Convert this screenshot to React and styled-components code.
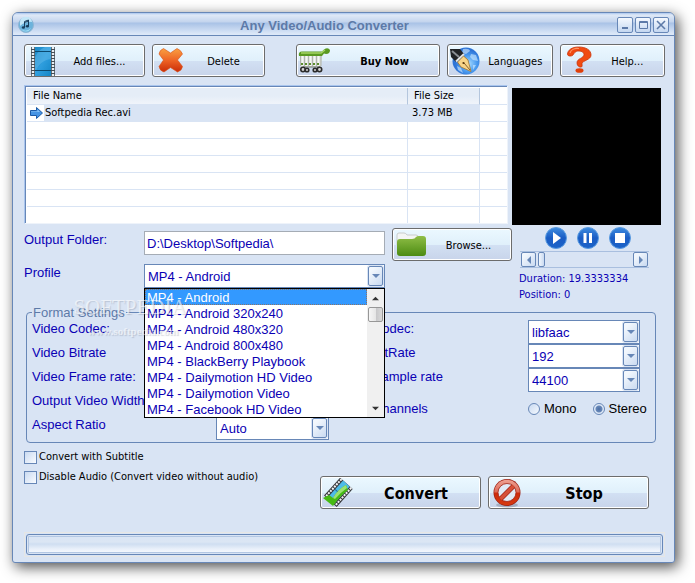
import React, {useState} from 'react'
import styled, {createGlobalStyle, css} from 'styled-components'


const GlobalStyle = createGlobalStyle`
    * {
        box-sizing: border-box;
    }
    body {
        margin: 0;
        background: #fff;
        font-family: 'Liberation Sans', Arial, sans-serif;
        font-size: 13px;
        line-height: 16px;
        color: #0a00b4;
    }
    button, input, select {
        font: inherit;
        color: inherit;
    }
`;

const tahoma = css`
    font-family: 'DejaVu Sans Condensed', 'DejaVu Sans', Tahoma, sans-serif;
    font-size: 11px;
`;

const Window = styled.main`
    margin: 12px 20px 20px 12px;
    border: 1px solid #6787b7;
    border-radius: 6px 6px 3px 3px;
    background: #d9e4f4;
    box-shadow: 3px 4px 14px rgba(0, 0, 0, .7);
`;

const TitleBar = styled.header`
    display: flex;
    align-items: center;
    height: 23px;
    padding: 2px 5px 0;
    border-bottom: 1px solid #6787b7;
    border-radius: 5px 5px 0 0;
    background: linear-gradient(#a9c5ee 0, #dfe9f7 2px, #c3d4ed 9px, #a9c2e6 10px, #dce8f8 21px);
`;

const Title = styled.h1`
    flex: 1;
    margin: 0;
    padding-top: 1px;
    text-align: center;
    font-size: 13px;
    line-height: 20px;
    font-weight: bold;
    color: #5d7aa8;
`;

const WindowButton = styled.button`
    display: flex;
    align-items: center;
    justify-content: center;
    width: 16px;
    height: 16px;
    margin-left: 2px;
    padding: 0;
    border: 1px solid #6787b7;
    border-radius: 2px;
    background: linear-gradient(#f5f9fe, #c4d7f0);
`;

const Content = styled.div`
    padding: 8px 9px 5px 11px;
`;

const Toolbar = styled.nav`
    display: flex;
    gap: 7px;
`;

const PushButton = styled.button`
    ${tahoma}
    display: flex;
    align-items: center;
    flex: ${props => props.$grow || 0} 1 ${props => props.$width || 0}px;
    height: 33px;
    margin-left: ${props => props.$apart ? '24px' : '0'};
    padding: 0 1px;
    border: 1px solid #6c6c6c;
    border-radius: 3px;
    background: linear-gradient(#ebf8ff 0, #e0f0fb 50%, #d2e0f3 52%, #c8d4ea 100%);
    box-shadow: inset 0 0 0 1px #fff;
    color: #000;
    font-weight: ${props => props.$bold ? 'bold' : 'normal'};
    font-size: ${props => props.$large ? '16px' : '11px'};
    white-space: nowrap;

    svg {
        flex: none;
    }
    span {
        flex: 1;
        padding-top: 2px;
        text-align: center;
    }
`;

const Main = styled.div`
    display: grid;
    grid-template-columns: 1fr 153px;
    margin-top: 8px;
`;

const TableFrame = styled.div`
    height: 139px;
    margin-right: 4px;
    overflow: hidden;
    border: 1px solid #a9c5ee;
    border-right-color: #eef3fa;
    border-bottom-color: #eef3fa;
    background: #fff;
    box-shadow: inset 1px 1px 0 #6787b7;
    padding: 2px 0 0 2px;
`;

const FileTable = styled.table`
    ${tahoma}
    width: 100%;
    table-layout: fixed;
    border-collapse: separate;
    border-spacing: 0;
    color: #000;

    th, td {
        height: 17px;
        padding: 0 4px;
        border-right: 1px solid #d9e4f4;
        border-bottom: 1px solid #d9e4f4;
        line-height: 16px;
        text-align: left;
        white-space: nowrap;
    }
    th {
        padding: 0 6px;
        border-right-color: #b4c6dd;
        font-weight: normal;
        background: linear-gradient(#e5edf7 50%, #f0f4fa);
    }
    th:last-child, td:last-child {
        border-right: 0;
        background: #fff;
    }
`;

const FileRow = styled.tr`
    background: ${props => props.$selected ? '#d9e4f4' : '#fff'};

    td:first-child {
        padding: 0;
    }
`;

const FileName = styled.span`
    display: flex;
    align-items: center;
    gap: 1px;
    height: 16px;

    svg {
        flex: none;
        background: #fff;
    }
`;

const OutputForm = styled.div`
    display: flex;
    align-items: flex-start;
    gap: 7px;
    margin-top: 4px;
`;

const Label = styled.label`
    padding-top: 1px;
`;

const FieldGrid = styled.div`
    flex: 1;
    display: grid;
    grid-template-columns: 120px 1fr;
    grid-auto-rows: 24px;
    row-gap: 9px;
    padding-top: 3px;
`;

const TextBox = styled.input`
    width: 100%;
    min-width: 0;
    height: 24px;
    padding: 0 2px;
    border: 1px solid #a5acb5;
    background: #fff;
    outline: none;
`;

const ComboBox = styled.div`
    position: relative;
    display: flex;
    height: 24px;
    border: 1px solid #6787b7;
    background: #fff;

    select {
        appearance: none;
        flex: 1;
        min-width: 0;
        padding: 2px 3px 0;
        border: 0;
        background: #fff;
        outline: none;
    }
`;

const ComboArrow = styled.span`
    display: flex;
    align-items: center;
    justify-content: center;
    width: 15px;
    margin: 1px;
    border: 1px solid #6787b7;
    border-radius: 2px;
    background: linear-gradient(135deg, #f2f7fd 20%, #c9daf1);
    box-shadow: 0 0 0 1px #d9e4f4;
    pointer-events: none;
`;

const DropDown = styled.div`
    position: absolute;
    z-index: 2;
    top: 23px;
    left: -1px;
    right: -1px;
    display: flex;
    border: 1px solid #000;
    background: #fff;
`;

const OptionList = styled.ul`
    flex: 1;
    margin: 0;
    padding: 0;
    list-style: none;
`;

const Option = styled.li`
    height: 16px;
    padding: 0 1px;
    border: 1px solid transparent;
    line-height: 15px;
    white-space: nowrap;

    ${props => props.$selected && css`
        border: 1px dotted #8a7468;
        background: #3399ff;
        color: #fff;
    `}
`;

const ScrollBar = styled.div`
    display: flex;
    flex-direction: column;
    align-items: center;
    width: 17px;
    padding: 6px 0 5px;
    background: #f0f0f0;
`;

const ScrollThumb = styled.div`
    width: 15px;
    height: 15px;
    margin: 5px 0 auto;
    border: 1px solid #979797;
    border-radius: 2px;
    background: linear-gradient(90deg, #f6f6f6, #e6e6e6 50%, #c6c6c8 52%, #dadada);
`;

const Player = styled.aside`
    padding-top: 3px;
`;

const Preview = styled.div`
    height: 137px;
    margin-right: 4px;
    background: #000;
`;

const PlayerButtons = styled.div`
    display: flex;
    justify-content: center;
    gap: 10px;
    height: 26px;
    padding: 2px 2px 2px 0;
`;

const RoundButton = styled.button`
    width: 22px;
    height: 22px;
    padding: 0;
    border: 0;
    border-radius: 50%;
    background: none;
`;

const SeekBar = styled.div`
    display: flex;
    gap: 2px;
    height: 17px;
    margin: 0 16px 0 8px;
    padding: 0 1px;
    border-top: 1px solid #a9bfdf;
    border-bottom: 1px solid #a9bfdf;
`;

const SeekButton = styled.button`
    display: flex;
    align-items: center;
    justify-content: center;
    width: 15px;
    padding: 0;
    border: 1px solid #6787b7;
    border-radius: 2px;
    background: linear-gradient(135deg, #f2f7fd 20%, #c9daf1);
`;

const SeekRange = styled.input`
    appearance: none;
    flex: 1;
    min-width: 0;
    margin: 0;
    background: none;

    &::-webkit-slider-thumb {
        appearance: none;
        width: 7px;
        height: 15px;
        border: 1px solid #6787b7;
        border-radius: 2px;
        background: linear-gradient(90deg, #f2f7fd, #c9daf1);
    }
`;

const Info = styled.p`
    ${tahoma}
    margin: 0 0 0 7px;
    line-height: 16px;
`;

const InfoBlock = styled.div`
    padding-top: 3px;
`;

const Settings = styled.fieldset`
    position: relative;
    display: flex;
    min-width: 0;
    margin: 2px 9px 0 2px;
    padding: 0 15px 2px 5px;
    border: 1px solid #6787b7;
    border-radius: 4px;

    legend {
        padding: 0 1px;
        line-height: 15px;
        color: #5d7aa8;
    }
`;

const VideoSettings = styled.div`
    flex: none;
    display: grid;
    grid-template-columns: 184px 113px;
    grid-auto-rows: 24px;
`;

const AudioSettings = styled.div`
    flex: 1;
    display: grid;
    grid-template-columns: 1fr 112px;
    grid-auto-rows: 24px;
    padding-left: 7px;
`;

const ChannelLabel = styled.span`
    margin-top: 9px;
`;

const RadioGroup = styled.div`
    display: flex;
    gap: 16px;
    margin-top: 9px;
    color: #000;

    label {
        display: flex;
        align-items: center;
        gap: 4px;
        height: 16px;
    }
`;

const Radio = styled.input`
    appearance: none;
    width: 12px;
    height: 12px;
    margin: 0;
    border: 1px solid #6787b7;
    border-radius: 50%;
    background: linear-gradient(135deg, #c9daf1, #f5f9fe);

    &:checked {
        background: radial-gradient(#4d6fa5 0, #6787b7 3px, #dfe9f7 4px);
    }
`;

const Watermark = styled.div`
    position: absolute;
    z-index: 3;
    top: -25px;
    left: 43px;
    width: 120px;
    text-align: center;
    font-family: 'Liberation Serif', serif;
    font-size: 21px;
    line-height: 24px;
    color: rgba(255, 255, 255, .6);
    text-shadow: 1px 1px 1px rgba(90, 100, 120, .25);
    pointer-events: none;

    small {
        display: block;
        padding-left: 6px;
        font-size: 11px;
        font-weight: bold;
    }
`;

const Bottom = styled.div`
    display: flex;
    justify-content: space-between;
    padding: 4px 16px 0 0;
`;

const CheckLabel = styled.label`
    ${tahoma}
    display: flex;
    align-items: center;
    gap: 2px;
    height: 20px;
    color: #000;
`;

const CheckBox = styled.input`
    appearance: none;
    width: 13px;
    height: 13px;
    margin: 0;
    border: 1px solid #6787b7;
    background: linear-gradient(135deg, #c9daf1, #fafcff);

    &:checked {
        background: #6787b7;
    }
`;

const Actions = styled.div`
    display: flex;
    flex: 0 1 329px;
    gap: 7px;
    margin-top: 29px;
`;

const ProgressFrame = styled.div`
    margin-top: 23px;
    padding: 1px;
    border: 1px solid #e6e6e4;
`;

const Progress = styled.div`
    height: 21px;
    border: 1px solid #6787b7;
    border-radius: 3px;
    background: linear-gradient(#d9e4f4 0, #dbe6f4 7px, #cfdef1 9px, #e9f0fa 14px, #f3f7fd 17px);
    box-shadow: inset 0 0 0 1px #d9e4f4, inset 0 0 0 2px #b3c7e3;
`;

const Triangle = ({turn = 0, fill = '#6787b7', size = 8}) => (
    <svg width={size} height={size} viewBox="0 0 8 8">
        <path d="M0 2h8L4 6z" fill={fill} transform={`rotate(${turn} 4 4)`} />
    </svg>
)

const LogoIcon = () => (
    <svg width="16" height="16" viewBox="0 0 16 16">
        <circle cx="8" cy="8" r="7.5" fill="#6cb3dc" stroke="#8fb6d4" />
        <path d="M2 6a6 6 0 0 1 12-1Q8 4 2 9z" fill="#c3e6f7" />
        <path d="M3 12Q8 16 13 11Q11 14.5 8 14.5T3 12z" fill="#a5e0f5" />
        <path d="M6.500 10V4.500l4-1.500v6M6.500 5.500l4-1.500" fill="none" stroke="#173d5c" />
        <ellipse cx="5.400" cy="10.500" rx="1.600" ry="1.200" fill="#173d5c" />
        <ellipse cx="9.400" cy="9.300" rx="1.600" ry="1.200" fill="#173d5c" />
    </svg>
)

const FilmIcon = () => (
    <svg width="30" height="30" viewBox="0 0 30 30">
        <defs>
            <linearGradient id="filmFill" x2="1" y2="1">
                <stop offset="0" stopColor="#1c88c4" />
                <stop offset=".5" stopColor="#2f9ede" />
                <stop offset="1" stopColor="#1486c6" />
            </linearGradient>
        </defs>
        <path d="M5 1h24v29H5z" fill="#454e55" />
        <path d="M9 1h16v29H9z" fill="url(#filmFill)" />
        <path d="M25 1v12C17 14 11 19 9 28V12C11 6 15 3 19 1z" fill="#69bdea" opacity=".45" />
        <path d="M7 1v29M27 1v29" stroke="#e8eef3" strokeWidth="2.400" strokeDasharray="2 1" />
        <path d="M9 5.500h16M9 24.500h16" stroke="#0b4a70" />
    </svg>
)

const DeleteIcon = () => (
    <svg width="30" height="30" viewBox="0 0 30 30">
        <defs>
            <linearGradient id="crossFill" x2="0" y2="1">
                <stop offset="0" stopColor="#f9a142" />
                <stop offset=".5" stopColor="#ee6425" />
                <stop offset="1" stopColor="#c92c08" />
            </linearGradient>
        </defs>
        <path d="M9.500 2.500 16.500 7 23 2.500Q27 4 28.500 8L23.500 14 28.500 20.500Q28 24.500 23.500 26L16.500 21.500 10 26Q6 25 5 20.500L9.500 14 5 8Q5.500 4 9.500 2.500z" fill="url(#crossFill)" stroke="#d94d12" strokeWidth=".6" />
    </svg>
)

const CartIcon = () => (
    <svg width="33" height="30" viewBox="0 0 33 30">
        <path d="M2 8h22l-1 13H3z" fill="#d3d7d0" />
        <path d="M4.500 9v11M8.500 9v11M12.500 9v11M16.500 9v11M20.500 9v11" stroke="#f6f8f5" strokeWidth="2" />
        <path d="M2.500 9v11M6.500 9v11M10.500 9v11M14.500 9v11M18.500 9v11M23 9v11" stroke="#b0b5ae" />
        <path d="M3 18h20" stroke="#5c8d2e" strokeWidth="2" strokeDasharray="2 2" />
        <path d="M1 10Q0 5.500 4 5.500h20l2-2q4-2.500 6 .5 0 4-4 4l-2-.5-2 2.500z" fill="#5b9a22" />
        <path d="M3 7h20l4-3" fill="none" stroke="#a6d565" strokeWidth="1.400" />
        <path d="M5 21h17" stroke="#6f756d" />
        <g fill="#d5d5d5" stroke="#2c2c2c" strokeWidth="1.600">
            <circle cx="5" cy="23.500" r="2.200" />
            <circle cx="9" cy="24" r="1.800" />
            <circle cx="17" cy="24" r="1.800" />
            <circle cx="21.500" cy="23.500" r="2.200" />
        </g>
    </svg>
)

const PenIcon = () => (
    <svg width="31" height="30" viewBox="0 0 31 30">
        <defs>
            <radialGradient id="globeFill" cx=".6" cy=".6">
                <stop offset="0" stopColor="#a3d8ff" />
                <stop offset=".6" stopColor="#4b9cf0" />
                <stop offset="1" stopColor="#2f74d6" />
            </radialGradient>
        </defs>
        <circle cx="17" cy="15" r="13.500" fill="url(#globeFill)" />
        <path d="M14 3q6-1 7 2l-4 3-4-1zM22 8l5 1 2 6-5-1-3-3zM8 20l4 2 2 5-5-3zM24 19l3 0-3 5z" fill="#d5edff" opacity=".6" />
        <path d="M1 3 11 3 15 8 7 16 2 11z" fill="#202225" />
        <path d="M3 5 10 11" stroke="#8a8e93" strokeWidth="2" />
        <path d="M15 8 7 15.500" stroke="#e2e4e6" strokeWidth="2" />
        <path d="M14.500 10 19 14 22 25.500 12 21 8.500 16z" fill="#f8d588" stroke="#a3742c" strokeWidth=".8" />
        <path d="M15 17 21 24" stroke="#6b4412" strokeWidth=".8" />
        <circle cx="14.500" cy="17" r="1.100" fill="#59370c" />
    </svg>
)

const HelpIcon = () => (
    <svg width="30" height="30" viewBox="0 0 30 30">
        <path d="M5.500 8.500C5.500 4 10 1 16.500 1 24 1 29 4 29 9c0 5-8.500 5.500-9 8.500 0 1.500.5 2.500-.5 3.500-2 .5-4.500-1-4.500-4 0-5 7-4.500 7-8.500 0-2-2-3.500-5-3.500-4 0-4.500 2-6 4-1.500 1.500-5 1.500-5.500-.5z" fill="#f04a12" stroke="#c93206" strokeWidth=".8" />
        <path d="M8 7C9 3.500 13 2 17 2.500" fill="none" stroke="#ff9463" strokeWidth="1.200" />
        <ellipse cx="17.500" cy="24.500" rx="4" ry="2.300" fill="#e03f0a" />
    </svg>
)

const FolderIcon = () => (
    <svg width="33" height="30" viewBox="0 0 33 30">
        <defs>
            <linearGradient id="folderFill" x2="0" y2="1">
                <stop offset="0" stopColor="#8fbe47" />
                <stop offset="1" stopColor="#4c8b12" />
            </linearGradient>
        </defs>
        <path d="M3 15V5q0-2 2-2h5q2 0 3 2h9q2 0 2 2v6z" fill="#f3f5f4" stroke="#c9cdcc" />
        <path d="M3 12q0-3 3-3h12q3 0 4-2 1-1 3-1h4q3 0 3 3v14q0 3-3 3H6q-3 0-3-3z" fill="url(#folderFill)" />
    </svg>
)

const ConvertIcon = () => (
    <svg width="31" height="30" viewBox="0 0 31 30">
        <g transform="rotate(42 16 14)">
            <path d="M8 2h17v24H8z" fill="#34363a" />
            <path d="M12 2h9v24h-9z" fill="#4dbbe8" />
            <path d="M12 14h9" stroke="#236a96" />
            <path d="M10 2v24M23 2v24" stroke="#f4f4f4" strokeWidth="2" strokeDasharray="2 1" />
        </g>
        <path d="M1 20 7 17 11 20Q16 11 24 7L26 12Q18 18 11 28z" fill="#46ba13" />
        <path d="M11 20Q16 11 24 7L25 10Q18 15 13 21z" fill="#9be172" />
    </svg>
)

const StopIcon = () => (
    <svg width="31" height="30" viewBox="0 0 31 30">
        <defs>
            <linearGradient id="stopFill" x2="0" y2="1">
                <stop offset="0" stopColor="#efa294" />
                <stop offset=".48" stopColor="#dd6a58" />
                <stop offset=".52" stopColor="#cd2a0c" />
                <stop offset="1" stopColor="#d63a10" />
            </linearGradient>
        </defs>
        <ellipse cx="17" cy="27" rx="11" ry="2.500" fill="#8d93a3" opacity=".6" />
        <circle cx="17" cy="14.500" r="13.500" fill="#9c2013" />
        <circle cx="17" cy="14.500" r="12.800" fill="url(#stopFill)" />
        <circle cx="17" cy="14.500" r="9" fill="#e1eaf6" stroke="#a12314" strokeWidth=".8" />
        <path d="M10.500 21 23.500 8" stroke="#a12314" strokeWidth="5" />
        <path d="M10.500 21 23.500 8" stroke="#d65039" strokeWidth="3.500" />
    </svg>
)

const ArrowIcon = () => (
    <svg width="17" height="16" viewBox="0 0 17 16">
        <path d="M3.500 5.500h6v-3L15.500 8l-6 5.500v-3h-6z" fill="#4694e4" stroke="#1c5ba8" />
        <path d="M4 6.500h6.500V4.500L13 7H4z" fill="#8ac3f6" />
    </svg>
)

const PlayerIcon = ({d}) => (
    <svg width="22" height="22" viewBox="0 0 22 22">
        <defs>
            <linearGradient id="discFill" x2="0" y2="1">
                <stop offset="0" stopColor="#3f8de0" />
                <stop offset=".5" stopColor="#1a5cc4" />
                <stop offset="1" stopColor="#1c63c8" />
            </linearGradient>
        </defs>
        <circle cx="11" cy="11" r="10.500" fill="url(#discFill)" stroke="#5a9be0" />
        <path d={d} fill="#fff" />
    </svg>
)

const profiles = [
    'MP4 - Android',
    'MP4 - Android 320x240',
    'MP4 - Android 480x320',
    'MP4 - Android 800x480',
    'MP4 - BlackBerry Playbook',
    'MP4 - Dailymotion HD Video',
    'MP4 - Dailymotion Video',
    'MP4 - Facebook HD Video',
]

const files = [
    {name: 'Softpedia Rec.avi', size: '3.73 MB'},
]

const videoFields = [
    {id: 'videoCodec', label: 'Video Codec:', value: ''},
    {id: 'videoBitrate', label: 'Video Bitrate', value: ''},
    {id: 'frameRate', label: 'Video Frame rate:', value: ''},
    {id: 'videoWidth', label: 'Output Video Width', value: ''},
    {id: 'aspect', label: 'Aspect Ratio', value: 'Auto'},
]

const audioFields = [
    {id: 'audioCodec', label: 'Audio Codec:', value: 'libfaac'},
    {id: 'audioBitrate', label: 'Audio BitRate', value: '192'},
    {id: 'sampleRate', label: 'Audio Sample rate', value: '44100'},
]

const ComboField = ({id, label, value}) => (
    <>
        <Label htmlFor={id}>{label}</Label>
        <ComboBox>
            <select id={id} defaultValue={value}>
                <option>{value}</option>
            </select>
            <ComboArrow><Triangle /></ComboArrow>
        </ComboBox>
    </>
)

const App = () => {
    const [folder, setFolder] = useState('D:\\Desktop\\Softpedia\\')
    const [profile, setProfile] = useState(profiles[0])
    const [open, setOpen] = useState(true)
    const [channels, setChannels] = useState('Stereo')
    const [position, setPosition] = useState(0)

    const toggleList = e => {
        e.preventDefault()
        setOpen(!open)
    }

    const pickProfile = name => {
        setProfile(name)
        setOpen(false)
    }

    return (
        <>
            <GlobalStyle />
            <Window>
                <TitleBar>
                    <LogoIcon />
                    <Title>Any Video/Audio Converter</Title>
                    <WindowButton aria-label="Minimize">
                        <svg width="12" height="12"><path d="M3 9h6" stroke="#5d7aa8" strokeWidth="2" /></svg>
                    </WindowButton>
                    <WindowButton aria-label="Maximize">
                        <svg width="12" height="12"><path d="M2.500 2.500h8v7h-8zM2 3.500h9" fill="none" stroke="#5d7aa8" /></svg>
                    </WindowButton>
                    <WindowButton aria-label="Close">
                        <svg width="12" height="12"><path d="M2 2l8 8M10 2l-8 8" stroke="#5d7aa8" strokeWidth="1.600" /></svg>
                    </WindowButton>
                </TitleBar>
                <Content>
                    <Toolbar>
                        <PushButton $grow={121}><FilmIcon /><span>Add files...</span></PushButton>
                        <PushButton $grow={113}><DeleteIcon /><span>Delete</span></PushButton>
                        <PushButton $grow={145} $apart $bold><CartIcon /><span>Buy Now</span></PushButton>
                        <PushButton $grow={105}><PenIcon /><span>Languages</span></PushButton>
                        <PushButton $grow={105}><HelpIcon /><span>Help...</span></PushButton>
                    </Toolbar>
                    <Main>
                        <div>
                            <TableFrame>
                                <FileTable>
                                    <colgroup>
                                        <col />
                                        <col width="72" />
                                        <col width="27" />
                                    </colgroup>
                                    <thead>
                                        <tr><th>File Name</th><th>File Size</th><th></th></tr>
                                    </thead>
                                    <tbody>
                                        {files.map(file => (
                                            <FileRow key={file.name} $selected>
                                                <td><FileName><ArrowIcon />{file.name}</FileName></td>
                                                <td>{file.size}</td>
                                                <td></td>
                                            </FileRow>
                                        ))}
                                        {[1, 2, 3, 4, 5, 6].map(n => (
                                            <FileRow key={n}><td></td><td></td><td></td></FileRow>
                                        ))}
                                    </tbody>
                                </FileTable>
                            </TableFrame>
                            <OutputForm>
                                <FieldGrid>
                                    <Label htmlFor="folder">Output Folder:</Label>
                                    <TextBox id="folder" value={folder} onChange={e => setFolder(e.target.value)} />
                                    <Label htmlFor="profile">Profile</Label>
                                    <ComboBox>
                                        <select id="profile" value={profile} onMouseDown={toggleList} onChange={e => setProfile(e.target.value)}>
                                            {profiles.map(name => <option key={name}>{name}</option>)}
                                        </select>
                                        <ComboArrow><Triangle /></ComboArrow>
                                        {open ? <DropDown>
                                            <OptionList role="listbox" aria-label="Profile">
                                                {profiles.map(name => (
                                                    <Option key={name} role="option" aria-selected={name === profile} $selected={name === profile} onClick={() => pickProfile(name)}>
                                                        {name}
                                                    </Option>
                                                ))}
                                            </OptionList>
                                            <ScrollBar>
                                                <Triangle turn={180} fill="#333" size={7} />
                                                <ScrollThumb />
                                                <Triangle fill="#333" size={7} />
                                            </ScrollBar>
                                        </DropDown> : null}
                                    </ComboBox>
                                </FieldGrid>
                                <PushButton $width={120}><FolderIcon /><span>Browse...</span></PushButton>
                            </OutputForm>
                        </div>
                        <Player>
                            <Preview />
                            <PlayerButtons>
                                <RoundButton aria-label="Play"><PlayerIcon d="M8 5l8 6-8 6z" /></RoundButton>
                                <RoundButton aria-label="Pause"><PlayerIcon d="M6.500 6h3v10h-3zM12 6h3v10h-3z" /></RoundButton>
                                <RoundButton aria-label="Stop playing"><PlayerIcon d="M6 6h10v10H6z" /></RoundButton>
                            </PlayerButtons>
                            <SeekBar>
                                <SeekButton aria-label="Back"><Triangle turn={90} /></SeekButton>
                                <SeekRange type="range" aria-label="Position" value={position} onChange={e => setPosition(e.target.value)} />
                                <SeekButton aria-label="Forward"><Triangle turn={270} /></SeekButton>
                            </SeekBar>
                            <InfoBlock>
                                <Info>Duration: 19.3333334</Info>
                                <Info>Position: {position}</Info>
                            </InfoBlock>
                        </Player>
                    </Main>
                    <Settings>
                        <legend>Format Settings</legend>
                        <VideoSettings>
                            {videoFields.map(field => <ComboField key={field.id} {...field} />)}
                        </VideoSettings>
                        <AudioSettings>
                            {audioFields.map(field => <ComboField key={field.id} {...field} />)}
                            <ChannelLabel>Audio Channels</ChannelLabel>
                            <RadioGroup>
                                {['Mono', 'Stereo'].map(name => (
                                    <label key={name}>
                                        <Radio type="radio" name="channels" checked={channels === name} onChange={() => setChannels(name)} />
                                        {name}
                                    </label>
                                ))}
                            </RadioGroup>
                        </AudioSettings>
                        <Watermark>SOFTPEDIA<small>www.softpedia.com</small></Watermark>
                    </Settings>
                    <Bottom>
                        <div>
                            <CheckLabel><CheckBox type="checkbox" />Convert with Subtitle</CheckLabel>
                            <CheckLabel><CheckBox type="checkbox" />Disable Audio (Convert video without audio)</CheckLabel>
                        </div>
                        <Actions>
                            <PushButton $grow={1} $bold $large><ConvertIcon /><span>Convert</span></PushButton>
                            <PushButton $grow={1} $bold $large><StopIcon /><span>Stop</span></PushButton>
                        </Actions>
                    </Bottom>
                    <ProgressFrame>
                        <Progress role="progressbar" aria-label="Conversion" aria-valuenow={0} />
                    </ProgressFrame>
                </Content>
            </Window>
        </>
    )
}

export default App;
